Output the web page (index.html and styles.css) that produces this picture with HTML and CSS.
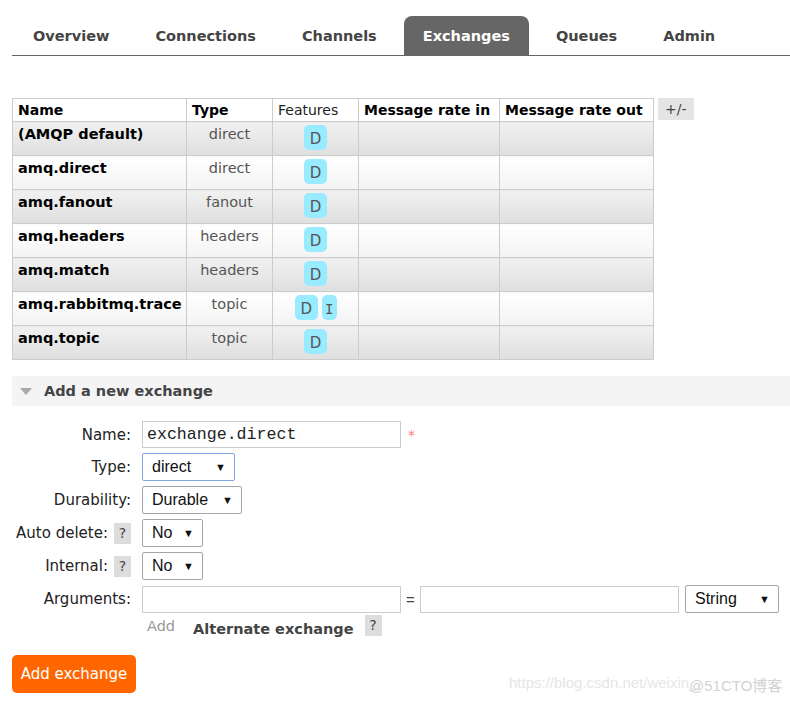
FILE: index.html
```html
<!DOCTYPE html>
<html>
<head>
<meta charset="utf-8">
<link rel="stylesheet" href="styles.css">
</head>
<body>
<div class="page">
  <ul class="tabs">
    <li class="tab">Overview</li>
    <li class="tab">Connections</li>
    <li class="tab">Channels</li>
    <li class="tab active">Exchanges</li>
    <li class="tab">Queues</li>
    <li class="tab">Admin</li>
  </ul>

  <div class="table-wrap">
    <table class="list">
      <colgroup>
        <col class="c-name"><col class="c-type"><col class="c-feat"><col class="c-in"><col class="c-out">
      </colgroup>
      <thead>
        <tr><th class="left">Name</th><th class="left">Type</th><th class="plain">Features</th><th>Message rate in</th><th>Message rate out</th></tr>
      </thead>
      <tbody>
        <tr class="odd"><td class="name">(AMQP default)</td><td class="type">direct</td><td class="feat"><abbr class="badge">D</abbr></td><td></td><td></td></tr>
        <tr class="even"><td class="name">amq.direct</td><td class="type">direct</td><td class="feat"><abbr class="badge">D</abbr></td><td></td><td></td></tr>
        <tr class="odd"><td class="name">amq.fanout</td><td class="type">fanout</td><td class="feat"><abbr class="badge">D</abbr></td><td></td><td></td></tr>
        <tr class="even"><td class="name">amq.headers</td><td class="type">headers</td><td class="feat"><abbr class="badge">D</abbr></td><td></td><td></td></tr>
        <tr class="odd"><td class="name">amq.match</td><td class="type">headers</td><td class="feat"><abbr class="badge">D</abbr></td><td></td><td></td></tr>
        <tr class="even"><td class="name">amq.rabbitmq.trace</td><td class="type">topic</td><td class="feat"><abbr class="badge">D</abbr><abbr class="badge serif">I</abbr></td><td></td><td></td></tr>
        <tr class="odd"><td class="name">amq.topic</td><td class="type">topic</td><td class="feat"><abbr class="badge">D</abbr></td><td></td><td></td></tr>
      </tbody>
    </table>
    <span class="toggle">+/-</span>
  </div>

  <div class="section-head"><span class="tri"></span>Add a new exchange</div>

  <div class="form">
    <div class="label">Name:</div>
    <div class="ctrl"><span class="input mono">exchange.direct</span><span class="req">*</span></div>

    <div class="label">Type:</div>
    <div class="ctrl"><span class="select focus w-type"><span class="val">direct</span><span class="arr">▼</span></span></div>

    <div class="label">Durability:</div>
    <div class="ctrl"><span class="select w-dur"><span class="val">Durable</span><span class="arr">▼</span></span></div>

    <div class="label">Auto delete: <span class="help">?</span></div>
    <div class="ctrl"><span class="select w-no"><span class="val">No</span><span class="arr">▼</span></span></div>

    <div class="label">Internal: <span class="help">?</span></div>
    <div class="ctrl"><span class="select w-no"><span class="val">No</span><span class="arr">▼</span></span></div>

    <div class="label">Arguments:</div>
    <div class="ctrl args">
      <span class="input"></span><span class="eq">=</span><span class="input"></span><span class="select w-str"><span class="val">String</span><span class="arr">▼</span></span>
    </div>

    <div class="label"></div>
    <div class="ctrl addrow"><span class="add">Add</span><span class="alt">Alternate exchange</span><span class="help">?</span></div>
  </div>

  <button class="btn">Add exchange</button>
</div>
<div class="watermark"><span class="wm1">https://blog.csdn.net/weixin_</span><span class="wm2">@51CTO博客</span></div>
</body>
</html>
```
FILE: styles.css
```css
* { box-sizing: border-box; }
html, body { margin: 0; padding: 0; background: #fff; }
body { font-family: "DejaVu Sans", Verdana, sans-serif; color: #222; width: 790px; height: 701px; position: relative; overflow: hidden; }

.page { padding: 16px 0 0 12px; }

.tabs { list-style: none; margin: 0; padding: 0 0 0 2px; display: flex; gap: 8px; border-bottom: 1px solid #666; height: 40px; }
.tab { padding: 0 19px 0 19px; height: 39px; line-height: 41px; font-weight: bold; font-size: 14.5px; color: #444; border-radius: 8px 8px 0 0; }
.tab.active { background: #666; color: #fff; }

.table-wrap { margin-top: 42px; display: flex; align-items: flex-start; gap: 4px; }
.list { border-collapse: collapse; table-layout: fixed; width: 641px; border: 1px solid #ccc; font-size: 14.5px; }
.c-name { width: 174px; } .c-type { width: 86px; } .c-feat { width: 86px; } .c-in { width: 141px; } .c-out { width: 154px; }
.list th { height: 23px; padding: 0 5px; border: 1px solid #ccc; text-align: left; font-weight: bold; font-size: 14px; color: #000; background: #fff; line-height: 21px; vertical-align: middle; white-space: nowrap; overflow: visible; }
.list th.plain { font-weight: normal; color: #222; }
.list td { height: 34px; border: 1px solid #ccc; padding: 3px 5px 0; vertical-align: top; line-height: 18px; white-space: nowrap; }
.list tr.odd td { background: linear-gradient(#f1f1f1, #dfdfdf); }
.list tr.even td { background: linear-gradient(#fff, #f3f3f3); }
.list td.name { font-weight: bold; color: #000; }
.list td.type { text-align: center; color: #555; }
.list td.feat { text-align: center; padding-top: 3px; font-size: 0; }
.badge { display: inline-block; background: #99ebff; color: #555; border-radius: 5px; padding: 0 6px; height: 25px; line-height: 29px; font-size: 15px; margin: 0 2px; text-decoration: none; }
.badge.serif { font-family: "DejaVu Sans Mono", monospace; padding: 0 3px; font-size: 14px; }

.toggle { display: inline-block; background: #e4e4e4; color: #444; font-size: 14px; padding: 0 7px; height: 22px; line-height: 22px; }

.section-head { margin-top: 16px; background: #f4f4f4; height: 30px; display: flex; align-items: center; font-weight: bold; font-size: 14.5px; color: #444; padding-left: 8px; }
.tri { width: 0; height: 0; border-left: 6px solid transparent; border-right: 6px solid transparent; border-top: 7px solid #aaa; margin-right: 12px; }

.form { display: grid; grid-template-columns: 119px auto; column-gap: 11px; row-gap: 5px; margin-top: 15px; align-items: center; }
.label { text-align: right; font-size: 15px; color: #222; margin-left: -12px; display: flex; justify-content: flex-end; align-items: center; gap: 6px; white-space: nowrap; }
.ctrl { display: flex; align-items: center; }
.input { display: inline-block; width: 259px; height: 27px; border: 1px solid #ccc; padding: 0 4px; line-height: 25px; }
.mono { font-family: "Liberation Mono", "Courier New", monospace; font-size: 16.6px; color: #222; }
.req { color: #f77; font-size: 14px; margin-left: 7px; }
.select { display: inline-flex; align-items: center; height: 28px; border: 1px solid #a6a6a6; border-radius: 2px; padding: 0 8px 0 9px; font-family: "Liberation Sans", Arial, sans-serif; font-size: 16px; color: #111; }
.select .arr { margin-left: auto; font-size: 11px; }
.select.focus { border-color: #7ca6e2; }
.w-type { width: 93px; } .w-dur { width: 100px; } .w-no { width: 61px; } .w-str { width: 94px; }
.help { display: inline-block; background: #ddd; color: #444; width: 17px; height: 21px; line-height: 21px; text-align: center; font-size: 14px; }
.args .eq { width: 19px; text-align: center; font-family: "Liberation Sans", Arial, sans-serif; color: #444; font-size: 15px; }
.args .select { margin-left: 6px; }
.addrow { height: 24px; align-items: flex-start; }
.add { color: #999; font-size: 14.5px; margin-left: 5px; margin-top: 0; }
.alt { font-weight: bold; color: #444; font-size: 14.5px; margin-left: 18px; margin-top: 3px; }
.addrow .help { margin-left: 11px; margin-top: -3px; }

.btn { display: block; margin-top: 13px; background: #f60; color: #fff; border: 0; border-radius: 5px; font-family: "DejaVu Sans", Verdana, sans-serif; font-size: 15px; height: 38px; width: 124px; padding: 0; }

.watermark { position: absolute; left: 509px; top: 674px; font-family: "Liberation Sans", Arial, "Noto Sans CJK SC", sans-serif; font-size: 15px; white-space: nowrap; }
.wm1 { color: #e6e6e6; }
.wm2 { position: absolute; left: 180px; top: 0; color: #d2d2d2; }
```
